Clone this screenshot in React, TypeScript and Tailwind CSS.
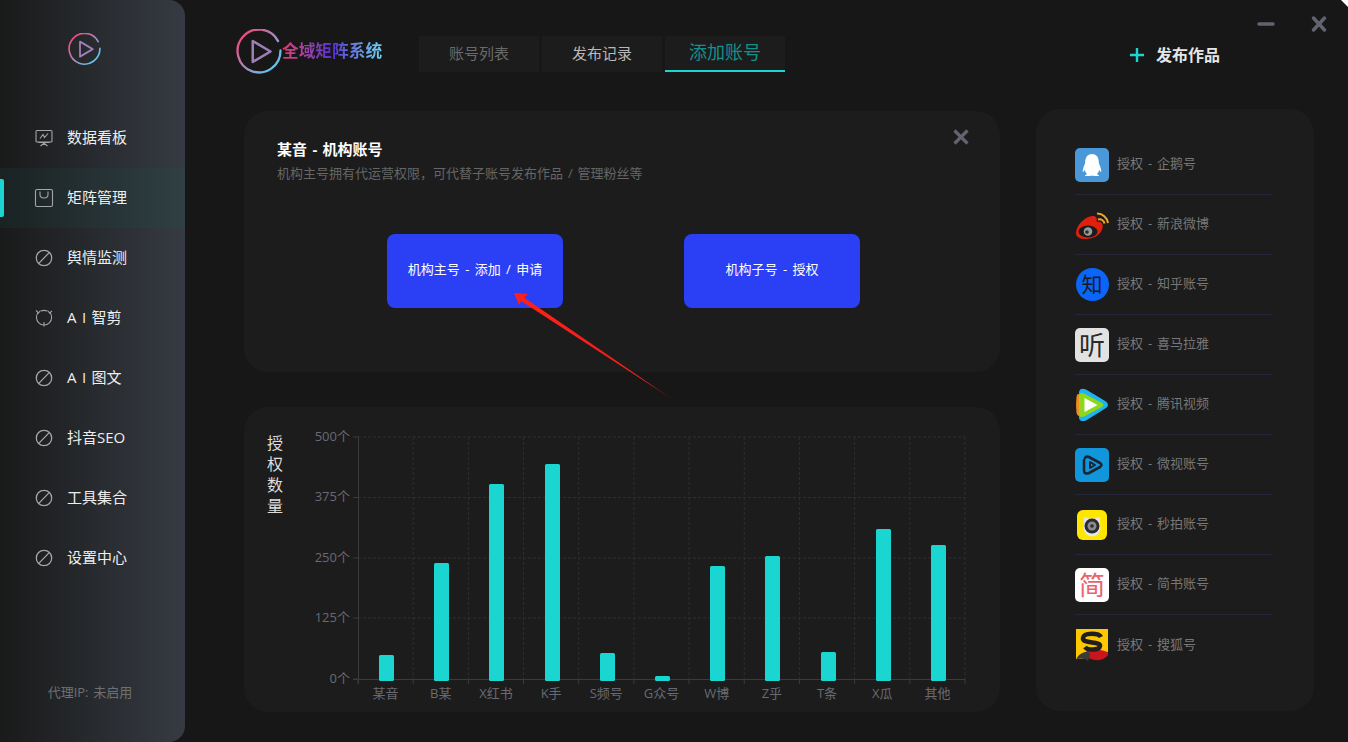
import React from "react";
import { FaQq } from "react-icons/fa";

const font = { fontFamily: '"Open Sans","Noto Sans CJK SC",sans-serif' };

function Logo({ size, id }: { size: number; id: string }) {
  return (
    <svg width={size} height={size} viewBox="0 0 44 44" fill="none">
      <defs>
        <linearGradient id={id} x1="2" y1="14" x2="42" y2="30" gradientUnits="userSpaceOnUse">
          <stop offset="0" stopColor="#e8507e" />
          <stop offset="0.5" stopColor="#a888c0" />
          <stop offset="1" stopColor="#5cc8f0" />
        </linearGradient>
      </defs>
      <path d="M35 5.5A20.5 20.5 0 1 0 40.5 13" stroke={`url(#${id})`} strokeWidth="2.2" strokeLinecap="round" transform="rotate(22 22 22)" />
      <path d="M16 11.5V31.5L33 21.5Z" stroke="#9d7fb5" strokeWidth="2.4" strokeLinejoin="round" />
    </svg>
  );
}

function Ban() {
  return (
    <svg width="20" height="20" viewBox="0 0 20 20" fill="none" stroke="#a3a5a8" strokeWidth="1.3">
      <circle cx="10" cy="10" r="7.7" />
      <path d="M4.8 15.4L15.2 4.6" />
    </svg>
  );
}
function Monitor() {
  return (
    <svg width="20" height="20" viewBox="0 0 20 20" fill="none" stroke="#a3a5a8" strokeWidth="1.1">
      <path d="M3 2.5H17Q18 2.5 18 3.5V13Q18 14 17 14H3Q2 14 2 13V3.5Q2 2.5 3 2.5Z" />
      <path d="M6 10.5L9 6.5L10.5 9.5L14 5.5" />
      <path d="M6.5 18L10 15.2L13.5 18M4.5 14.5H15.5" />
    </svg>
  );
}
function Bag() {
  return (
    <svg width="20" height="20" viewBox="0 0 20 20" fill="none" stroke="#a3a5a8" strokeWidth="1.1">
      <rect x="1.5" y="1.5" width="17" height="17" rx="1.5" />
      <path d="M6 3.5V6.5Q6 10 10 10Q14 10 14 6.5V3.5" />
    </svg>
  );
}
function Cut() {
  return (
    <svg width="20" height="20" viewBox="0 0 20 20" fill="none" stroke="#a3a5a8" strokeWidth="1.1">
      <path d="M4.5 4.2A7.6 7.6 0 1 0 15.6 4.2M7 3A7.6 7.6 0 0 1 13 3" />
      <path d="M2 2.5L4.5 5L6.5 2.5M13.5 2.5L15.6 5L18 3M10 14V18.5" />
    </svg>
  );
}

const nav: { label: string; icon: React.ReactNode; active?: boolean }[] = [
  { label: "数据看板", icon: <Monitor /> },
  { label: "矩阵管理", icon: <Bag />, active: true },
  { label: "舆情监测", icon: <Ban /> },
  { label: "A I 智剪", icon: <Cut /> },
  { label: "A I 图文", icon: <Ban /> },
  { label: "抖音SEO", icon: <Ban /> },
  { label: "工具集合", icon: <Ban /> },
  { label: "设置中心", icon: <Ban /> },
];

function Sidebar() {
  return (
    <aside className="flex h-full w-[185px] shrink-0 flex-col rounded-r-[16px] bg-gradient-to-r from-[#191a1a] to-[#363b43]">
      <div className="flex h-[108px] shrink-0 justify-center pt-[33px] pr-[17px]">
        <Logo size={33} id="lg1" />
      </div>
      {nav.map((n) => (
        <div
          key={n.label}
          className={`relative flex h-[60px] items-center gap-[13px] pl-[34px] text-[15px] text-[#eeeeee] ${n.active ? "bg-gradient-to-r from-[#1a2222] to-[#304044]" : ""}`}
        >
          {n.active && <span className="absolute left-0 top-[11px] h-[38px] w-[4px] rounded-r-[2px] bg-[#1bd6d0]" />}
          {n.icon}
          <span className="pb-[2px]">{n.label}</span>
        </div>
      ))}
      <div className="mt-auto pb-[40px] pr-[5px] text-center text-[13px] text-[#6d7073]">代理IP: 未启用</div>
    </aside>
  );
}

function Tab({ label, cls }: { label: string; cls: string }) {
  return <div className={`flex h-[36px] w-[120px] items-center justify-center bg-[#1c1c1c] pb-[2px] ${cls}`}>{label}</div>;
}

function Header() {
  return (
    <header className="flex h-[109px] shrink-0 items-start pl-[51px] pt-[36px]">
      <div className="-mt-[7px] flex w-[183px] items-center">
        <Logo size={46} id="lg2" />
        <span className="-mt-[3px] bg-gradient-to-r from-[#e0356e] via-[#5a28d0] to-[#6ed4f2] bg-clip-text text-[16.7px] font-bold text-transparent">
          全域矩阵系统
        </span>
      </div>
      <div className="flex gap-[3px]">
        <Tab label="账号列表" cls="text-[15px] text-[#6a6a6a]" />
        <Tab label="发布记录" cls="text-[15px] text-[#b8b8b8]" />
        <Tab label="添加账号" cls="border-b-2 border-[#1bd6d0] text-[18px] text-[#14908b]" />
      </div>
      <div className="ml-[344px] flex h-[38px] items-center gap-[11px]">
        <svg width="16" height="16" viewBox="0 0 16 16" stroke="#1bd6d0" strokeWidth="2.4">
          <path d="M8 1V15M1 8H15" />
        </svg>
        <span className="text-[16px] font-bold text-[#e6e6e6]">发布作品</span>
      </div>
    </header>
  );
}

function AddCard() {
  return (
    <section className="relative h-[261px] rounded-[24px] bg-[#1c1c1c] pl-[33px] pt-[27px]">
      <h2 className="text-[15px] font-bold leading-[22px] text-white">某音 - 机构账号</h2>
      <p className="mt-[3px] text-[13px] leading-[20px] text-[#666666]">机构主号拥有代运营权限，可代替子账号发布作品 / 管理粉丝等</p>
      <svg className="absolute right-[30px] top-[17px]" width="18" height="18" viewBox="0 0 18 18" stroke="#63636f" strokeWidth="3.2">
        <path d="M2.5 2.5L15.5 15.5M15.5 2.5L2.5 15.5" />
      </svg>
      <div className="mt-[51px] flex gap-[121px] pl-[110px]">
        <button className="flex h-[74px] w-[176px] items-center justify-center rounded-[8px] bg-[#2b3ff5] pb-[2px] text-[13px] text-white [word-spacing:2px]">机构主号 - 添加 / 申请</button>
        <button className="flex h-[74px] w-[176px] items-center justify-center rounded-[8px] bg-[#2b3ff5] pb-[2px] text-[13px] text-white [word-spacing:2px]">机构子号 - 授权</button>
      </div>
    </section>
  );
}

const bars: [string, number][] = [
  ["某音", 655], ["B某", 563], ["X红书", 484], ["K手", 464], ["S频号", 653], ["G众号", 676],
  ["W博", 566], ["Z乎", 556], ["T条", 652], ["X瓜", 529], ["其他", 545],
];
const rows: [string, number][] = [["500个", 437], ["375个", 497.5], ["250个", 558], ["125个", 618], ["0个", 679]];

function ChartCard() {
  const ox = 244, oy = 407;
  const left = 358, right = 965, step = (right - left) / 11;
  return (
    <section className="mt-[35px] flex h-[305px] rounded-[24px] bg-[#1c1c1c]">
      <div className="flex w-[62px] shrink-0 flex-col items-end pr-[23px] pt-[26px] text-[16px] leading-[21px] text-[#dedede]">
        <span>授</span><span>权</span><span>数</span><span>量</span>
      </div>
      <svg width="694" height="305" viewBox={`${ox + 62} ${oy} 694 305`} style={{ fontFamily: font.fontFamily }}>
        {rows.slice(0, 4).map(([, y]) => (
          <line key={y} x1={left} x2={right} y1={y} y2={y} stroke="#2e2e33" strokeDasharray="3 2" />
        ))}
        {Array.from({ length: 11 }, (_, i) => (
          <line key={i} x1={left + step * (i + 1)} x2={left + step * (i + 1)} y1={437} y2={679} stroke="#2e2e33" strokeDasharray="3 2" />
        ))}
        <line x1={left + 0.5} x2={left + 0.5} y1={437} y2={684} stroke="#3a3a3f" />
        <line x1={353} x2={right} y1={679.5} y2={679.5} stroke="#3a3a3f" />
        {Array.from({ length: 12 }, (_, i) => (
          <line key={i} x1={left + step * i} x2={left + step * i} y1={679} y2={684} stroke="#3a3a3f" />
        ))}
        {rows.map(([t, y]) => (
          <g key={t}>
            <line x1={353} x2={358} y1={y} y2={y} stroke="#3a3a3f" />
            <text x={350} y={y + 3.5} textAnchor="end" fontSize="13" fill="#696a73">{t}</text>
          </g>
        ))}
        {bars.map(([t, top], i) => {
          const cx = left + step * (i + 0.5);
          return (
            <g key={t}>
              <rect x={Math.round(cx - 6.5)} y={top} width={15} height={681 - top} rx={1.5} fill="#1bd6d0" />
              <text x={cx} y={698} textAnchor="middle" fontSize="13" fill="#696a73">{t}</text>
            </g>
          );
        })}
      </svg>
    </section>
  );
}

const Rounded = ({ bg, children }: { bg: string; children: React.ReactNode }) => (
  <div className={`flex h-[34px] w-[34px] items-center justify-center rounded-[5px] ${bg}`}>{children}</div>
);

const icons: React.ReactNode[] = [
  <Rounded bg="bg-[#4a98d8]"><FaQq className="text-[22px] text-white" /></Rounded>,
  <svg width="34" height="34" viewBox="0 0 34 34" fill="none">
    <path d="M1 25C1 18 9 9 17 8C21 7.500 22.500 10 21.500 13.500C26.500 13 28.500 16 27.500 20C26 27 18 31 11 31C5 31 1 29 1 25Z" fill="#e0200c" />
    <ellipse cx="13" cy="23.500" rx="9.500" ry="6" fill="#1b1b1b" />
    <circle cx="13" cy="23.500" r="4.300" fill="#9a9a9a" />
    <circle cx="12" cy="24" r="1.800" fill="#2a2a2a" />
    <path d="M23 11.500A5 5 0 0 1 29.500 15.500M22 5.500A11 11 0 0 1 33 15" stroke="#f0a828" strokeWidth="2" />
  </svg>,
  <div className="flex h-[33px] w-[33px] items-center justify-center rounded-full bg-[#0a66f8] text-[21px] leading-none text-[#1a1a1a]">知</div>,
  <Rounded bg="bg-[#e2e2e2]"><span className="text-[26px] leading-none text-[#2a2a2a]">听</span></Rounded>,
  <svg width="34" height="34" viewBox="0 0 34 34">
    <path d="M5 7Q2 4 1.500 9Q0.500 17 1.500 25Q3 30 6 27Z" fill="#f08a24" />
    <path d="M4 4Q5 -1 11 1.500L31 13.500Q35 17 31 20L11 32.500Q5 34.500 4 30Z" fill="#1eb4f0" />
    <path d="M4 8Q4 4 9 5.500L27 15Q29.500 17 27 19L9 28.500Q4 30 4 26Z" fill="#8ed81c" />
    <path d="M9.500 10L22.500 17L9.500 24Z" fill="#ffffff" />
  </svg>,
  <div className="flex h-[34px] w-[34px] items-center justify-center rounded-[5px] bg-[#1296db]">
    <svg width="24" height="24" viewBox="0 0 24 24" fill="none" stroke="#1c2430" strokeLinejoin="round">
      <path d="M4 7V17Q4 22 9 20L20 14Q23 12 20 10L9 4Q6 3 5 5" strokeWidth="2.6" strokeLinecap="round" />
      <path d="M10 9V15L15 12Z" strokeWidth="2" />
    </svg>
  </div>,
  <div className="flex h-[30px] w-[30px] items-center justify-center rounded-[6px] bg-[#ffe600]">
    <svg width="24" height="24" viewBox="0 0 24 24">
      <path d="M4 4L9 5.500H15L20 4L20 12A8.500 8.500 0 1 1 4 12Z" fill="#e6e6e6" />
      <circle cx="12" cy="13" r="7.500" fill="#2a2a30" />
      <circle cx="12" cy="13" r="4.500" fill="#8a8a90" />
      <circle cx="12" cy="13" r="1.800" fill="#2a2a30" />
    </svg>
  </div>,
  <Rounded bg="bg-white"><span className="text-[26px] leading-none text-[#e8636a]">简</span></Rounded>,
  <svg width="34" height="34" viewBox="0 0 34 34">
    <path d="M1 1H33V24Q26 32 14 30L1 31Z" fill="#fdc800" />
    <path d="M10 25C15 18 28 23 33 24V27Q29 33 20 32Q13 31 10 25Z" fill="#c8161c" />
    <path d="M1 32C3 27 8 23 14 24C16 28 14 31 13 33C9 30 5 30 1 32Z" fill="#3a3a3a" />
    <path d="M26 9C24 5 9 4 8 10C7 16 26 13 25 18C24 23 12 22 10 19" fill="none" stroke="#1f1f1f" strokeWidth="4.500" />
  </svg>,
];

const platforms = ["企鹅号", "新浪微博", "知乎账号", "喜马拉雅", "腾讯视频", "微视账号", "秒拍账号", "简书账号", "搜狐号"];

function PlatformCard() {
  return (
    <aside className="h-[602px] w-[278px] shrink-0 rounded-[24px] bg-[#1c1c1c] pl-[39px] pr-[41px] pt-[26px]">
      {platforms.map((p, i) => (
        <div key={p} className={`flex h-[60px] items-center ${i < platforms.length - 1 ? "border-b border-[#25253a]" : ""}`}>
          <div className="flex w-[34px] shrink-0 justify-center">{icons[i]}</div>
          <span className="ml-[8px] pb-[1px] text-[13px] text-[#777777]">授权 - {p}</span>
        </div>
      ))}
    </aside>
  );
}

export default function App() {
  return (
    <div className="relative flex h-[742px] w-[1348px] overflow-hidden bg-[#171717] [word-spacing:1.5px]" style={font}>
      <Sidebar />
      <main className="flex min-w-0 flex-1 flex-col">
        <Header />
        <div className="flex gap-[36px] pl-[59px]">
          <div className="w-[756px] shrink-0 pt-[2px]">
            <AddCard />
            <ChartCard />
          </div>
          <PlatformCard />
        </div>
      </main>
      <svg className="pointer-events-none absolute left-0 top-0" width="1348" height="742" viewBox="0 0 1348 742">
        <defs>
          <linearGradient id="arrow" x1="514" y1="293" x2="672" y2="399" gradientUnits="userSpaceOnUse">
            <stop offset="0" stopColor="#ff2018" />
            <stop offset="0.8" stopColor="#f02018" />
            <stop offset="1" stopColor="#802010" />
          </linearGradient>
        </defs>
        <path d="M514 293L528 294L524 297.500L672 399L521 301L519 305Z" fill="url(#arrow)" />
        <path d="M1259 24H1273" stroke="#63636f" strokeWidth="3.500" strokeLinecap="round" />
        <path d="M1313.500 18L1324.500 30M1324.500 18L1313.500 30" stroke="#63636f" strokeWidth="3.500" strokeLinecap="round" />
        <path d="M1341 0H1348V7Z" fill="#ffffff" />
      </svg>
    </div>
  );
}
